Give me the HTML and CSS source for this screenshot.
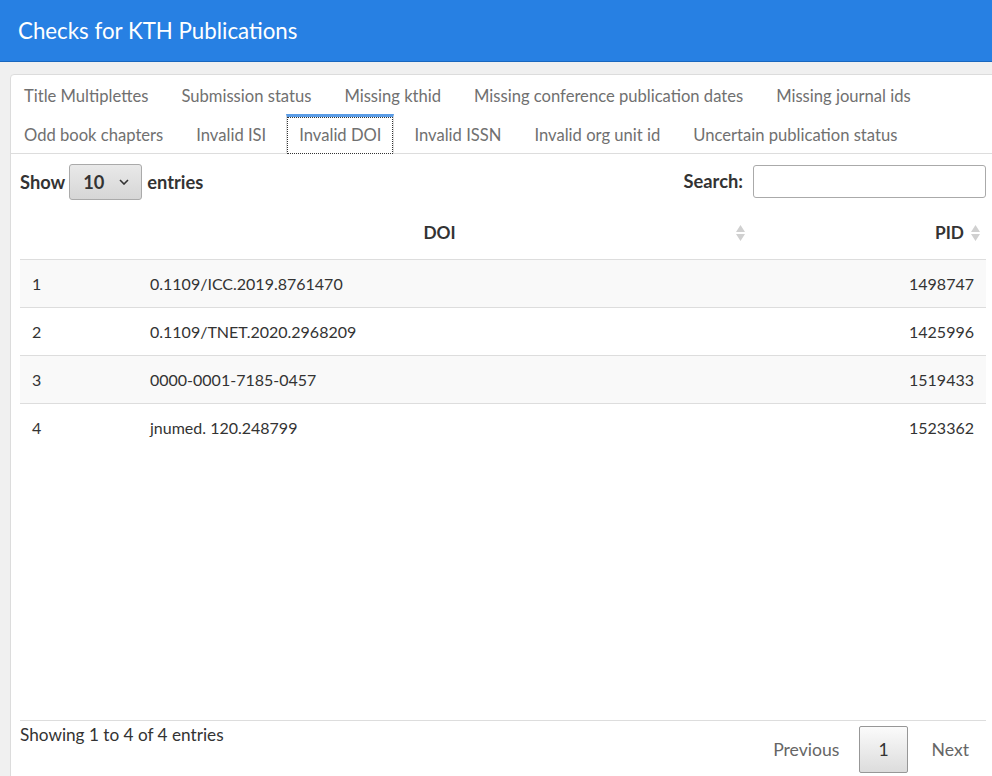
FILE: index.html
```html
<!DOCTYPE html>
<html lang="en">
<head>
<meta charset="utf-8">
<title>Checks for KTH Publications</title>
<link rel="stylesheet" href="styles.css">
</head>
<body>
<header class="navbar">
  <span class="brand">Checks for KTH Publications</span>
</header>
<main class="main">
  <section class="card">
    <nav class="tabs">
      <ul class="tab-row">
        <li class="tab"><a>Title Multiplettes</a></li>
        <li class="tab"><a>Submission status</a></li>
        <li class="tab"><a>Missing kthid</a></li>
        <li class="tab"><a>Missing conference publication dates</a></li>
        <li class="tab"><a>Missing journal ids</a></li>
      </ul>
      <ul class="tab-row">
        <li class="tab"><a>Odd book chapters</a></li>
        <li class="tab"><a>Invalid ISI</a></li>
        <li class="tab active"><a>Invalid DOI</a></li>
        <li class="tab"><a>Invalid ISSN</a></li>
        <li class="tab"><a>Invalid org unit id</a></li>
        <li class="tab"><a>Uncertain publication status</a></li>
      </ul>
    </nav>
    <div class="pane">
      <div class="controls">
        <label class="length">Show
          <span class="select"><span class="select-val">10</span>
            <svg class="chev" width="10" height="6" viewBox="0 0 10 6"><path d="M1 1 L5 5 L9 1" fill="none" stroke="#333" stroke-width="1.6"/></svg>
          </span>
          entries</label>
        <label class="search">Search: <span class="search-input"></span></label>
      </div>
      <div class="table-wrap">
        <table class="data">
          <colgroup>
            <col class="w-idx">
            <col>
            <col class="w-pid">
          </colgroup>
          <thead>
            <tr>
              <th></th>
              <th class="c-doi">DOI<svg class="sort" width="11" height="18" viewBox="0 0 11 18"><path d="M5.5 1 L10 8 H1 Z M5.5 17 L10 10 H1 Z" fill="#d0d0d0"/></svg></th>
              <th class="c-pid">PID<svg class="sort" width="11" height="18" viewBox="0 0 11 18"><path d="M5.5 1 L10 8 H1 Z M5.5 17 L10 10 H1 Z" fill="#d0d0d0"/></svg></th>
            </tr>
          </thead>
          <tbody>
            <tr class="odd"><td>1</td><td>0.1109/ICC.2019.8761470</td><td class="num">1498747</td></tr>
            <tr><td>2</td><td>0.1109/TNET.2020.2968209</td><td class="num">1425996</td></tr>
            <tr class="odd"><td>3</td><td>0000-0001-7185-0457</td><td class="num">1519433</td></tr>
            <tr><td>4</td><td>jnumed. 120.248799</td><td class="num">1523362</td></tr>
          </tbody>
        </table>
      </div>
      <div class="footer">
        <div class="info">Showing 1 to 4 of 4 entries</div>
        <div class="paginate">
          <span class="pbtn prev">Previous</span>
          <span class="pbtn current">1</span>
          <span class="pbtn next">Next</span>
        </div>
      </div>
    </div>
  </section>
</main>
</body>
</html>
```
FILE: styles.css
```css
html, body {
  margin: 0;
  padding: 0;
  height: 100%;
  overflow: hidden;
}
body {
  background: #f0f0f0;
  font-family: Lato, "Open Sans", sans-serif;
  font-size: 16px;
  color: #333;
  display: flex;
  flex-direction: column;
}
.navbar {
  height: 61px;
  flex: none;
  background: #2780e3;
  border-bottom: 1px solid #1967be;
  display: flex;
  align-items: center;
  padding-left: 18px;
}
.brand {
  color: #fff;
  font-size: 22.3px;
}
.main {
  flex: 1;
  padding: 12px 0 0 10px;
  display: flex;
  flex-direction: column;
  min-height: 0;
}
.card {
  flex: 1;
  margin-right: -4px;
  margin-bottom: -14px;
  background: #fff;
  border: 1px solid #dcdcdc;
  border-radius: 4px;
  display: flex;
  flex-direction: column;
}
.tabs {
  border-bottom: 1px solid #ddd;
  font-size: 16.6px;
}
.tab-row {
  list-style: none;
  margin: 0;
  padding: 0;
  display: flex;
}
.tab {
  margin-right: 7px;
  border: 1px solid transparent;
  border-top: 3px solid transparent;
  border-bottom: 0;
}
.tab a {
  display: block;
  height: 36px;
  line-height: 36px;
  padding: 0 12px;
  color: #707070;
  white-space: nowrap;
}
.tab.active {
  border-color: #ddd;
  border-top-color: #5a9ce6;
  background: #fff;
  margin-bottom: -1px;
}
.tab.active a {
  height: 36px;
  outline: 1px dotted #333;
  outline-offset: -1px;
  padding-bottom: 1px;
}
.pane {
  flex: 1;
  display: flex;
  flex-direction: column;
  padding: 10px 9px 0 9px;
}
.controls {
  display: flex;
  justify-content: space-between;
  align-items: flex-start;
  height: 36px;
  font-weight: bold;
  font-size: 18.3px;
}
.length {
  display: flex;
  align-items: center;
  height: 36px;
  gap: 4px;
}
.select {
  width: 73px;
  height: 36px;
  box-sizing: border-box;
  border: 1px solid #aaa;
  border-radius: 3px;
  background: linear-gradient(#e9e9e9, #d6d6d6);
  display: flex;
  align-items: center;
  justify-content: space-between;
  padding: 0 12px 0 13px;
  margin-right: 1px;
}
.search {
  display: flex;
  align-items: center;
  height: 34px;
  gap: 10px;
}
.search-input {
  width: 233px;
  height: 33px;
  box-sizing: border-box;
  border: 1px solid #aaa;
  border-radius: 3px;
  background: #fff;
}
.table-wrap {
  flex: 1;
  margin-top: 12px;
}
.data {
  width: 100%;
  border-collapse: collapse;
  table-layout: fixed;
}
.w-idx { width: 118px; }
.w-pid { width: 235px; }
.data th {
  height: 41px;
  padding: 0 22px 6px 12px;
  font-weight: bold;
  font-size: 17.3px;
  border-bottom: 1px solid #ddd;
  position: relative;
}
.data th.c-doi { text-align: center; }
.data th.c-pid { text-align: right; }
.sort {
  position: absolute;
  top: 12px;
  right: 5px;
}
.data td {
  height: 47px;
  padding: 0 12px;
  border-top: 1px solid #ddd;
}
.data tbody tr:first-child td { border-top: 0; }
.data tr.odd td { background: #f9f9f9; }
.data td.num { text-align: right; }
.footer {
  border-top: 1px solid #ddd;
  display: flex;
  justify-content: space-between;
  height: 68px;
  flex: none;
  font-size: 17.2px;
}
.info {
  padding-top: 2px;
  line-height: 24px;
}
.paginate {
  display: flex;
  align-items: center;
  margin-top: 5px;
  height: 47px;
  font-size: 17.6px;
}
.pbtn {
  margin-left: 2px;
  line-height: 45px;
  color: #666;
  border: 1px solid transparent;
  border-radius: 2px;
}
.pbtn.prev {
  padding: 0 17px;
}
.pbtn.current {
  color: #333;
  border-color: #979797;
  background: linear-gradient(#fbfbfb, #dcdcdc);
  padding: 0 18px;
}
.pbtn.next {
  padding: 0 16px 0 21px;
}
```
